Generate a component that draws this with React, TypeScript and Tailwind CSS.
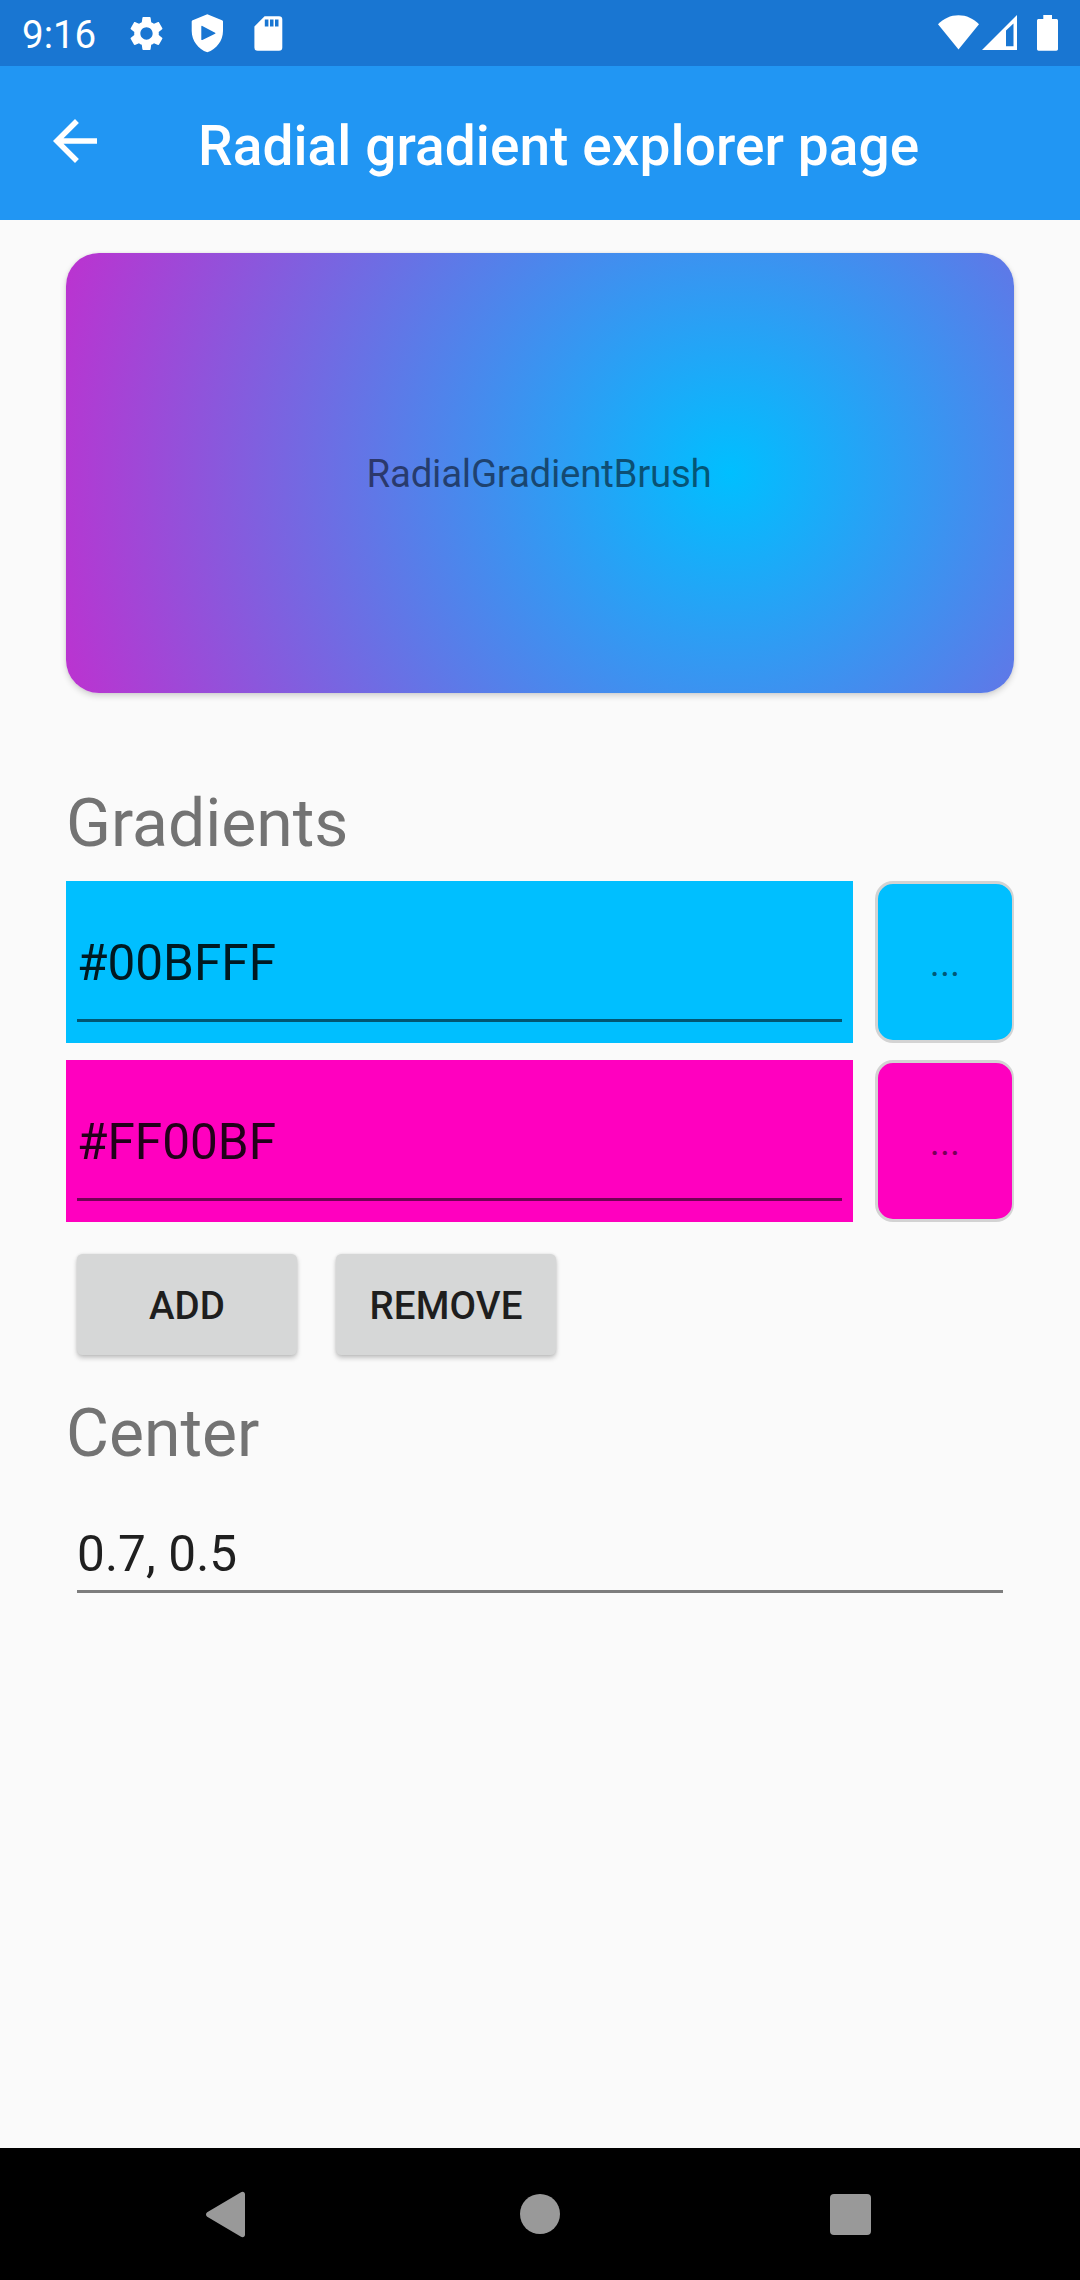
import React from "react";

function StatusBar() {
  return (
    <div className="flex h-[66px] shrink-0 items-start bg-[#1976d2] pl-[22px] pr-[22px] text-white">
      <span className="mt-[12px] w-[104px] text-[38.5px] leading-[46px]">9:16</span>
      <svg className="mt-[13px] h-[41px] w-[41px] shrink-0" viewBox="0 0 24 24" fill="currentColor">
        <path d="M19.14 12.94c.04-.3.06-.61.06-.94 0-.32-.02-.64-.07-.94l2.03-1.58c.18-.14.23-.41.12-.61l-1.92-3.32c-.12-.22-.37-.29-.59-.22l-2.39.96c-.5-.38-1.03-.7-1.62-.94l-.36-2.54c-.04-.24-.24-.41-.48-.41h-3.84c-.24 0-.43.17-.47.41l-.36 2.54c-.59.24-1.13.57-1.62.94l-2.39-.96c-.22-.08-.47 0-.59.22L2.74 8.87c-.12.21-.08.47.12.61l2.03 1.58c-.05.3-.09.63-.09.94s.02.64.07.94l-2.03 1.58c-.18.14-.23.41-.12.61l1.92 3.32c.12.22.37.29.59.22l2.39-.96c.5.38 1.03.7 1.62.94l.36 2.54c.05.24.24.41.48.41h3.84c.24 0 .44-.17.47-.41l.36-2.54c.59-.24 1.13-.56 1.62-.94l2.39.96c.22.08.47 0 .59-.22l1.92-3.32c.12-.22.07-.47-.12-.61l-2.01-1.58zM12 15.6c-1.98 0-3.6-1.62-3.6-3.6s1.62-3.6 3.6-3.6 3.6 1.62 3.6 3.6-1.62 3.6-3.6 3.6z" />
      </svg>
      <svg className="ml-[24px] mt-[14px] h-[39px] w-[33px] shrink-0" viewBox="0 0 33 39" fill="currentColor" fillRule="evenodd">
        <path d="M16.3 .3 31 6.2c.7.3 1 .7 1 1.4V17c0 9.5-6.5 18.4-15.7 21.3C7.200 35.400.700 26.500.700 17V7.600c0-.700.300-1.100 1-1.400ZM11.300 11.900c-.700-.300-1 0-1 .700v12.600c0 .800.400 1.100 1.100.800l12.700-6.300c.500-.300.500-.800 0-1Z" />
      </svg>
      <svg className="ml-[30px] mt-[16px] h-[35px] w-[29px] shrink-0" viewBox="0 0 29 35" fill="currentColor" fillRule="evenodd">
        <path d="M10.600.200H25a3.300 3.300 0 0 1 3.300 3.300v28A3.300 3.300 0 0 1 25 34.800H3.700A3.300 3.300 0 0 1 .400 31.500V10.600ZM10.800 3.500v7h3.600v-7ZM16 3.500v7h3.500v-7ZM21 3.500v7h3.500v-7Z" />
      </svg>
      <div className="ml-auto flex">
        <svg className="mt-[15px] h-[35px] w-[41px]" viewBox="0 0 41 35" fill="currentColor">
          <path d="M0 9.300C5.500 3.500 12.500.200 20.500.200S35.500 3.500 41 9.300L20.500 34.500Z" />
        </svg>
        <svg className="ml-[3px] mt-[15px] h-[35px] w-[35px]" viewBox="0 0 35 35" fill="currentColor" fillRule="evenodd">
          <path d="M35 0V35H0ZM24 15.500V31.200H31.500V8.500Z" />
        </svg>
        <svg className="ml-[20px] mt-[15px] h-[36px] w-[21px]" viewBox="0 0 21 36" fill="currentColor">
          <path d="M6.300 0h8.700v4h4.300c1 0 1.700.700 1.700 1.700v28.300c0 1-.700 1.700-1.700 1.700H1.700C.700 35.700 0 35 0 34V5.700C0 4.700.700 4 1.700 4h4.600Z" />
        </svg>
      </div>
    </div>
  );
}

function AppBar() {
  return (
    <header className="flex h-[154px] shrink-0 items-center bg-[#2196f3] pl-[42px] text-white">
      <button className="mb-[4px] mr-[90px] h-[66px] w-[66px]" aria-label="Back">
        <svg className="h-[66px] w-[66px]" viewBox="0 0 24 24" fill="currentColor">
          <path d="M20 11H7.830l5.590-5.590L12 4l-8 8 8 8 1.410-1.410L7.830 13H20v-2z" />
        </svg>
      </button>
      <h1 className="whitespace-nowrap pt-[6px] text-[55px] font-medium leading-[66px] tracking-[0.08px]">Radial gradient explorer page</h1>
    </header>
  );
}

function GradientRow({ value, color }: { value: string; color: string }) {
  return (
    <div className="flex h-[162px] gap-[22px]">
      <div className="flex w-[787px] flex-col px-[11px]" style={{ backgroundColor: color }}>
        <div className="mt-[52px] h-[89px] border-b-[3px] border-black/55 text-[49.5px] leading-[60px] text-black/87">{value}</div>
      </div>
      <button
        className="flex w-[139px] items-center justify-center rounded-[18px] border-[3px] border-r-2 border-[#d3d3d3] pt-[2px] text-[38.5px] leading-[46px] text-black/54"
        style={{ backgroundColor: color }}
      >
        ...
      </button>
    </div>
  );
}

function RaisedButton({ children }: { children: React.ReactNode }) {
  return (
    <button className="flex h-[101px] w-[220px] items-center justify-center rounded-[5.5px] bg-[#d6d7d7] pt-[2px] text-[38.5px] font-medium leading-[46px] tracking-[0.1px] text-[#1e1e1e] shadow-[0_3px_5px_rgba(0,0,0,0.22),0_0_3px_rgba(0,0,0,0.1)]">
      {children}
    </button>
  );
}

function NavigationBar() {
  return (
    <nav className="flex h-[132px] shrink-0 items-start bg-black text-[#999999]">
      <svg className="ml-[206px] mt-[43px] h-[47px] w-[39px]" viewBox="0 0 39 47" fill="currentColor">
        <path d="M1.200 21.300 34.600 1.400C36.800.100 39 1 39 3.500v40c0 2.500-2.200 3.400-4.400 2.100L1.200 25.700c-1.600-1-1.600-3.400 0-4.400Z" />
      </svg>
      <div className="ml-[275px] mt-[46px] h-[40px] w-[40px] rounded-full bg-[#999999]" />
      <div className="ml-[270px] mt-[46px] h-[41px] w-[41px] rounded-[4px] bg-[#999999]" />
    </nav>
  );
}

export default function App() {
  return (
    <div className="flex h-[2280px] w-[1080px] flex-col bg-[#fafafa] font-['Roboto',sans-serif]">
      <StatusBar />
      <AppBar />
      <main className="flex flex-1 flex-col px-[66px] pt-[33px]">
        <section className="flex h-[440px] items-center justify-center rounded-[33px] bg-[radial-gradient(circle_948px_at_70%_50%,#00bfff,#ff00bf)] pr-[2px] pt-[2px] text-[38.5px] leading-[46px] tracking-[-0.28px] text-black/54 shadow-[0_3px_6px_rgba(0,0,0,0.16),0_0_3px_rgba(0,0,0,0.08)]">
          RadialGradientBrush
        </section>
        <h2 className="mt-[92px] text-[66px] leading-[77px] text-[#737373]">Gradients</h2>
        <div className="mt-[19px] flex flex-col gap-[17px]">
          <GradientRow value="#00BFFF" color="#00bfff" />
          <GradientRow value="#FF00BF" color="#ff00bf" />
        </div>
        <div className="mt-[32px] flex gap-[39px] pl-[11px]">
          <RaisedButton>ADD</RaisedButton>
          <RaisedButton>REMOVE</RaisedButton>
        </div>
        <h2 className="mt-[40px] text-[66px] leading-[77px] text-[#737373]">Center</h2>
        <div className="mx-[11px] mt-[52px] h-[69px] border-b-[3px] border-[#7d7d7d] text-[49.5px] leading-[60px] tracking-[0.1px] text-[#1f1f1f]">0.7, 0.5</div>
      </main>
      <NavigationBar />
    </div>
  );
}
